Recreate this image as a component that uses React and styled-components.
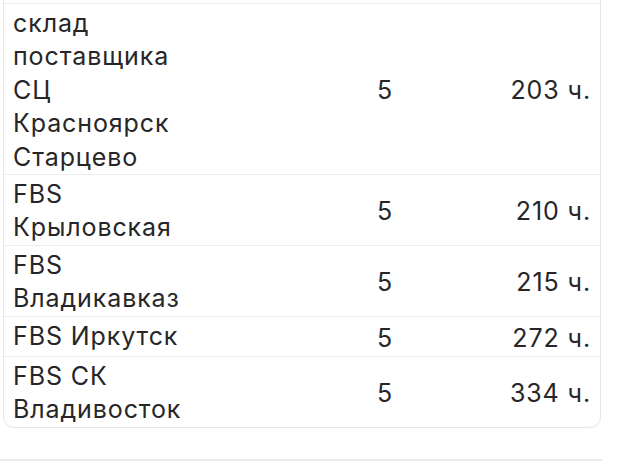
import styled, { createGlobalStyle } from "styled-components";

const rows = [
  { name: "склад поставщика СЦ Красноярск Старцево", qty: 5, hours: 203 },
  { name: "FBS Крыловская", qty: 5, hours: 210 },
  { name: "FBS Владикавказ", qty: 5, hours: 215 },
  { name: "FBS Иркутск", qty: 5, hours: 272 },
  { name: "FBS СК Владивосток", qty: 5, hours: 334 },
];

const Global = createGlobalStyle`
  html, body { margin: 0; padding: 0; background: #fff; }
  body { font-family: Inter, "Noto Sans", sans-serif; color: #262628; }
`;

const Page = styled.div`
  width: 620px;
  height: 468px;
  overflow: hidden;
`;

const Card = styled.div`
  margin-left: 3px;
  width: 598px;
  box-sizing: border-box;
  padding-top: 3px;
  border: 1px solid #e8e8e8;
  border-top: none;
  border-radius: 0 0 11px 11px;
  background: #fff;
`;

const Row = styled.div`
  display: grid;
  grid-template-columns: 364px 1fr auto;
  padding: 0 9px;
  border-top: 1px solid #ececec;
  font-size: 25px;
  letter-spacing: 0.9px;
  line-height: 33.4px;
`;

const Name = styled.div`
  max-width: 186px;
  padding: 3px 0 0;
`;

const Num = styled.div`
  align-self: center;
  padding: 5px 0 1px;
  text-align: ${(p) => (p.$right ? "right" : "left")};
`;

const Rule = styled.div`
  margin-top: 31px;
  width: 602px;
  height: 2px;
  background: #ebebeb;
`;

export default function App() {
  return (
    <Page>
      <Global />
      <Card>
        {rows.map((r) => (
          <Row key={r.name}>
            <Name>{r.name}</Name>
            <Num>{r.qty}</Num>
            <Num $right>{r.hours} ч.</Num>
          </Row>
        ))}
      </Card>
      <Rule />
    </Page>
  );
}
